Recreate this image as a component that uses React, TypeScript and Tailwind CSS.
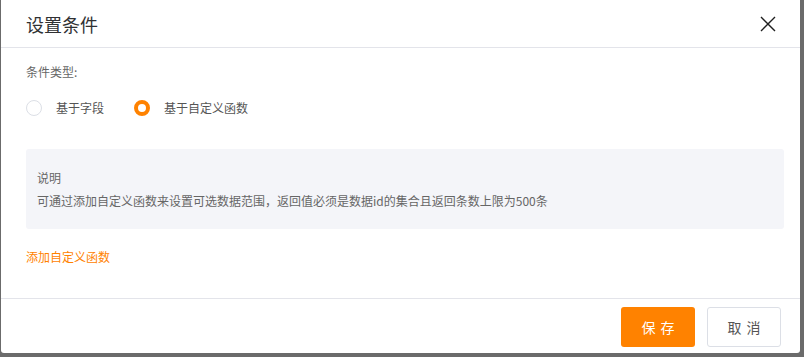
export default function App() {
  return (
    <div
      className="h-[357px] w-[804px] bg-[#6b6b6b] pl-[1px]"
      style={{ fontFamily: '"Microsoft YaHei", "Noto Sans CJK SC", sans-serif' }}
    >
      <div className="flex h-[353px] w-[799px] flex-col rounded-b-[3px] bg-white">
        <header className="flex h-[48px] items-center justify-between border-b border-[#e3e4ea] pl-[25px] pr-[24px]">
          <h2 className="text-[18px] leading-none text-[#303133]">设置条件</h2>
          <svg width="16" height="16" viewBox="0 0 16 16" className="text-[#1f1f1f]">
            <path d="M1 1L15 15M15 1L1 15" stroke="currentColor" strokeWidth="1.4" />
          </svg>
        </header>

        <div className="flex-1 pl-[25px] pr-[17px]">
          <p className="mt-[16px] text-[12px] leading-[16px] text-[#666]">条件类型:</p>
          <div className="mt-[19px] flex items-center text-[12px] text-[#555]">
            <label className="flex items-center">
              <span className="h-[16px] w-[16px] rounded-full border border-[#dcdfe6] bg-white" />
              <span className="ml-[14px]">基于字段</span>
            </label>
            <label className="ml-[30px] flex items-center">
              <span className="h-[16px] w-[16px] rounded-full border-[4px] border-[#ff8200] bg-white" />
              <span className="ml-[14px]">基于自定义函数</span>
            </label>
          </div>

          <div className="mt-[32px] h-[80px] w-[758px] rounded-[3px] bg-[#f4f5f9] px-[11px] pt-[21px] text-[12px] text-[#666]">
            <p className="leading-[16px]">说明</p>
            <p className="mt-[7px] leading-[16px]">
              可通过添加自定义函数来设置可选数据范围，返回值必须是数据id的集合且返回条数上限为500条
            </p>
          </div>

          <button className="mt-[20px] block text-[12px] leading-[16px] text-[#ff8200]">
            添加自定义函数
          </button>
        </div>

        <footer className="flex h-[55px] items-start justify-end gap-[12px] border-t border-[#e3e4ea] pr-[19px] pt-[8px]">
          <button className="h-[40px] w-[74px] rounded-[3px] bg-[#ff8200] text-[14px] tracking-[5px] text-white">
            <span className="pl-[5px]">保存</span>
          </button>
          <button className="h-[40px] w-[74px] rounded-[3px] border border-[#dcdfe6] bg-white text-[14px] tracking-[5px] text-[#555]">
            <span className="pl-[5px]">取消</span>
          </button>
        </footer>
      </div>
    </div>
  )
}
